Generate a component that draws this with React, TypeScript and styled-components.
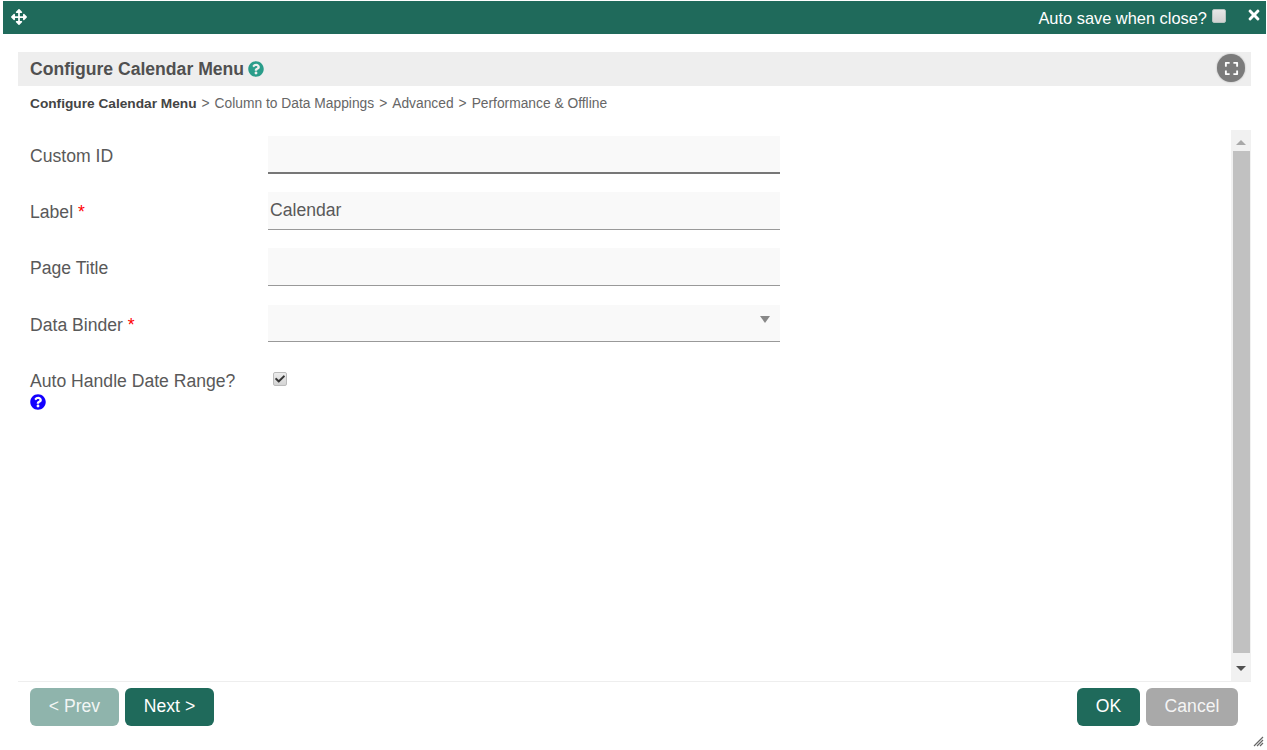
import styled, { createGlobalStyle } from "styled-components";
import { FaArrowsAlt, FaCheck, FaExpand, FaQuestionCircle, FaTimes } from "react-icons/fa";

const GlobalStyle = createGlobalStyle`
  html, body {
    margin: 0;
    padding: 0;
    background: #fff;
  }
  body {
    font-family: "Liberation Sans", Arial, sans-serif;
    color: #555;
  }
`;

const fields = [
  { label: "Custom ID", value: "", focused: true },
  { label: "Label", value: "Calendar", required: true },
  { label: "Page Title", value: "" },
];

export default function App() {
  return (
    <Page>
      <GlobalStyle />
      <TopBar>
        <FaArrowsAlt size={16} />
        <AutoSave>
          Auto save when close?
          <TopCheck />
        </AutoSave>
        <CloseBtn>
          <FaTimes size={16} />
        </CloseBtn>
      </TopBar>
      <Body>
        <TitleBar>
          <Title>Configure Calendar Menu</Title>
          <HelpIcon>
            <FaQuestionCircle size={16} />
          </HelpIcon>
          <FullscreenBtn>
            <FaExpand size={15} />
          </FullscreenBtn>
        </TitleBar>
        <Crumbs>
          <b>Configure Calendar Menu</b>
          <Sep>&gt;</Sep>
          <span>Column to Data Mappings</span>
          <Sep>&gt;</Sep>
          <span>Advanced</span>
          <Sep>&gt;</Sep>
          <span>Performance &amp; Offline</span>
        </Crumbs>
        <ScrollArea>
          <Form>
            {fields.map((f) => (
              <Row key={f.label}>
                <Label>
                  {f.label}
                  {f.required && <Req> *</Req>}
                </Label>
                <Input focused={f.focused}>{f.value}</Input>
              </Row>
            ))}
            <SelectRow>
              <Label>
                Data Binder<Req> *</Req>
              </Label>
              <SelectInput>
                <Caret />
              </SelectInput>
            </SelectRow>
            <CheckRow>
              <Label>
                Auto Handle Date Range?
                <BlueHelp>
                  <FaQuestionCircle size={16} />
                </BlueHelp>
              </Label>
              <CheckBox>
                <FaCheck size={10} />
              </CheckBox>
            </CheckRow>
          </Form>
          <Scrollbar>
            <ArrowUp />
            <Thumb />
            <ArrowDown />
          </Scrollbar>
        </ScrollArea>
        <Footer>
          <Group>
            <Btn muted>&lt; Prev</Btn>
            <Btn>Next &gt;</Btn>
          </Group>
          <Group>
            <Btn wide={63}>OK</Btn>
            <Btn wide={92} grey>
              Cancel
            </Btn>
          </Group>
        </Footer>
      </Body>
      <Grip width="11" height="11" viewBox="0 0 11 11">
        <path d="M1 10L10 1M4 10L10 4M7 10L10 7" stroke="#666" strokeWidth="1.2" />
      </Grip>
    </Page>
  );
}

const Page = styled.div`
  position: relative;
  width: 1267px;
  height: 750px;
  overflow: hidden;
  padding: 1px 1px 0 3px;
  box-sizing: border-box;
`;

const TopBar = styled.div`
  display: flex;
  align-items: flex-start;
  height: 33px;
  padding: 8px 4px 0 8px;
  box-sizing: border-box;
  background: #1f6a5b;
  color: #fff;
`;

const AutoSave = styled.div`
  display: flex;
  align-items: flex-start;
  margin-left: auto;
  font-size: 16.4px;
  line-height: 18px;
`;

const TopCheck = styled.span`
  width: 14px;
  height: 14px;
  margin-left: 5px;
  border-radius: 2px;
  background: linear-gradient(#e6e6e6, #d2d2d2);
  border: 1px solid #b5c4c0;
  box-sizing: border-box;
`;

const CloseBtn = styled.span`
  display: flex;
  margin-left: 20px;
  margin-top: -2px;
`;

const Body = styled.div`
  padding: 18px 15px 0 15px;
`;

const TitleBar = styled.div`
  display: flex;
  align-items: center;
  height: 34px;
  padding: 0 6px 0 12px;
  background: #eee;
`;

const Title = styled.h1`
  margin: 0;
  font-size: 17.6px;
  font-weight: bold;
  color: #505050;
`;

const HelpIcon = styled.span`
  display: flex;
  margin-left: 4px;
  color: #2a9d8a;
`;

const FullscreenBtn = styled.span`
  display: flex;
  align-items: center;
  justify-content: center;
  width: 28px;
  height: 28px;
  margin-left: auto;
  margin-bottom: 2px;
  border-radius: 50%;
  background: #7b7b7b;
  color: #fff;
  box-shadow: 0 0 2px rgba(0, 0, 0, 0.3);
`;

const Crumbs = styled.div`
  display: flex;
  align-items: center;
  height: 34px;
  padding: 0 12px;
  font-size: 13.8px;
  color: #666;
  b {
    color: #444;
    font-size: 13.7px;
  }
`;

const Sep = styled.span`
  margin: 0 5px;
`;

const ScrollArea = styled.div`
  display: flex;
  justify-content: space-between;
  height: 552px;
  margin-top: 10px;
  border-bottom: 1px solid #eee;
  box-sizing: border-box;
`;

const Form = styled.div`
  display: flex;
  flex-direction: column;
  padding: 6px 0 0 12px;
`;

const Row = styled.div`
  display: flex;
  align-items: flex-start;
  margin-bottom: 18px;
`;

const SelectRow = styled(Row)`
  margin-top: 1px;
`;

const CheckRow = styled(Row)`
  margin-top: 1px;
`;

const Label = styled.div`
  width: 238px;
  padding-top: 9px;
  padding-right: 20px;
  box-sizing: border-box;
  font-size: 17.6px;
  line-height: 22px;
  color: #595959;
`;

const Req = styled.span`
  color: #f00;
`;

const BlueHelp = styled.span`
  display: block;
  height: 20px;
  margin-top: 1px;
  color: #1400ff;
`;

const Input = styled.div<{ focused?: boolean }>`
  position: relative;
  width: 512px;
  height: 38px;
  padding: 7px 2px 0;
  box-sizing: border-box;
  background: #f9f9f9;
  border-bottom: ${({ focused }) => (focused ? "2px solid #777" : "1px solid #999")};
  font-size: 17.6px;
  line-height: 22px;
  color: #595959;
`;

const SelectInput = styled(Input)`
  height: 37px;
`;

const Caret = styled.span`
  position: absolute;
  right: 10px;
  top: 11px;
  border-left: 5px solid transparent;
  border-right: 5px solid transparent;
  border-top: 7px solid #888;
`;

const CheckBox = styled.span`
  display: flex;
  align-items: center;
  justify-content: center;
  width: 14px;
  height: 14px;
  margin: 11px 0 0 5px;
  border-radius: 2px;
  border: 1px solid #bbb;
  box-sizing: border-box;
  background: linear-gradient(#ececec, #d4d4d4);
  color: #333;
`;

const Scrollbar = styled.div`
  display: flex;
  flex-direction: column;
  align-items: center;
  width: 20px;
  background: #f1f1f1;
`;

const ArrowUp = styled.span`
  margin: 10px 0 6px;
  border-left: 5px solid transparent;
  border-right: 5px solid transparent;
  border-bottom: 5px solid #a8a8a8;
`;

const ArrowDown = styled.span`
  margin: 13px 0 10px;
  border-left: 5px solid transparent;
  border-right: 5px solid transparent;
  border-top: 5px solid #505050;
`;

const Thumb = styled.div`
  flex: 1;
  width: 17px;
  background: #c1c1c1;
`;

const Footer = styled.div`
  display: flex;
  justify-content: space-between;
  padding: 6px 13px 0 12px;
`;

const Group = styled.div`
  display: flex;
  gap: 6px;
`;

const Btn = styled.button<{ muted?: boolean; grey?: boolean; wide?: number }>`
  width: ${({ wide }) => wide ?? 89}px;
  height: 38px;
  padding: 0 0 2px;
  border: 0;
  border-radius: 6px;
  font-family: inherit;
  font-size: 17.6px;
  color: ${({ muted, grey }) => (muted || grey ? "rgba(255,255,255,0.9)" : "#fff")};
  background: ${({ muted, grey }) => (muted ? "#8fb4ac" : grey ? "#a9a9a9" : "#1f6a5b")};
`;

const Grip = styled.svg`
  position: absolute;
  right: 3px;
  bottom: 3px;
`;
